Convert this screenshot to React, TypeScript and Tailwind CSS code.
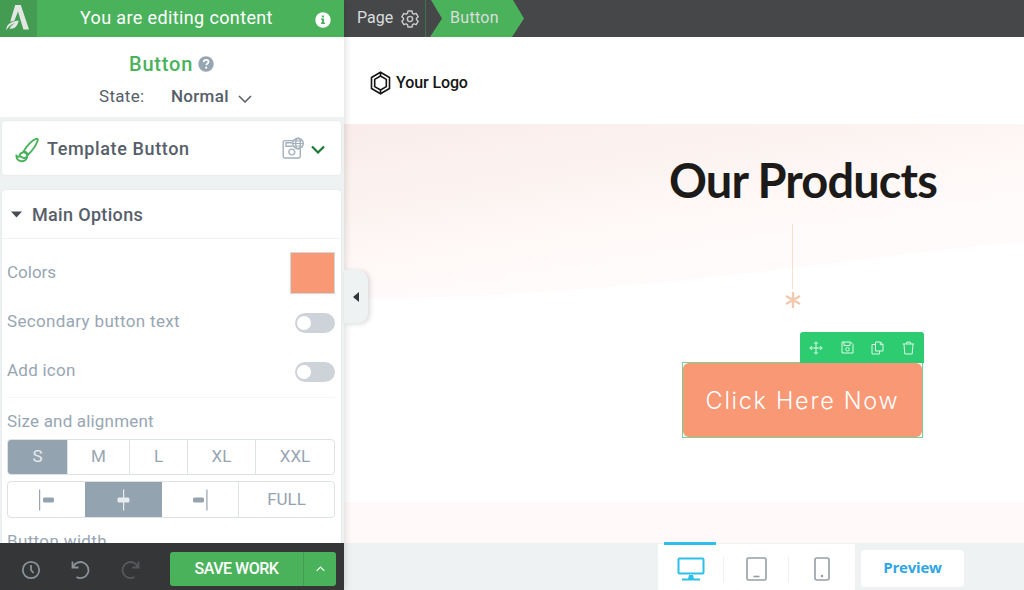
import type { ReactNode } from 'react'
import clsx from 'clsx'

const sizes = [
  { label: 'S', width: 'w-[60px]', active: true },
  { label: 'M', width: 'w-[62px]' },
  { label: 'L', width: 'w-[58px]' },
  { label: 'XL', width: 'w-[68px]' },
  { label: 'XXL', width: 'flex-1' },
]

function LogoMark() {
  return (
    <svg width="37" height="37" viewBox="0 0 37 37" fill="#e4e6e4">
      <path d="M15.200 5h5.600l8.200 24.600h-5.600L18 11.600l-3.600 9.200-4.200 1z" />
      <path d="M6.300 30.200c-.2-5.600 3.800-8.400 12.300-9.700-.7 5.200-3.800 8.800-9.200 8.200 1.600-2.600 3.500-4.200 5.700-5.600-3.800 1.200-6.800 3.600-8.800 7.100z" />
    </svg>
  )
}

function BrushIcon() {
  return (
    <svg width="24" height="26" viewBox="0 0 24 26" fill="none" stroke="#4bb25c" strokeWidth="1.900" strokeLinecap="round" strokeLinejoin="round">
      <path d="M8.600 14.500C11.500 9 17 3 21 1.800c1.600-.4 2.100.6 1.600 2C21 8.500 17 14 12.800 18z" />
      <path d="M8.600 14.500c2.200.2 3.800 1.600 4.200 3.500" />
      <path d="M8 15.500c-2 .3-3.200 1.600-3.500 3.200-.3 1.400-1.400 1.500-3.200-.2.100 4.200 3 6 6.200 5.700 3-.3 5-2.500 4.600-5.400" />
      <path d="M5 19.500c2 .2 2.500 1.500 4 1.500 1.200 0 1.500-.8 3-.9" />
    </svg>
  )
}

function SaveGlobeIcon() {
  return (
    <svg width="22" height="22" viewBox="0 0 22 22" fill="none" stroke="#a3b0bc" strokeWidth="1.400">
      <path d="M11.500 3.600H3a1.800 1.800 0 0 0-1.800 1.800v13.800A1.800 1.800 0 0 0 3 21h13.500a1.800 1.800 0 0 0 1.800-1.800v-7.500" />
      <path d="M10.500 9.300H4V5.800h6.500" />
      <circle cx="9.800" cy="15" r="2.900" />
      <circle cx="16" cy="6.500" r="5.300" />
      <ellipse cx="16" cy="6.500" rx="2.300" ry="5.300" />
      <path d="M10.700 6.500h10.600M11.600 3.900h8.800M11.600 9.100h8.800" strokeWidth="1" />
    </svg>
  )
}

function Chevron({ width, height, className }: { width: number; height: number; className: string }) {
  return (
    <svg width={width} height={height} viewBox="0 0 14 8" className={className} fill="none" stroke="currentColor">
      <path d="M1 1l6 6 6-6" />
    </svg>
  )
}

function Row({ label, className, children }: { label: string; className: string; children?: ReactNode }) {
  return (
    <div className={clsx('flex items-center justify-between text-[17px] text-[#98a6b3]', className)}>
      <span>{label}</span>
      {children}
    </div>
  )
}

function Toggle() {
  return (
    <div className="mt-[2px] flex h-5 w-10 items-center rounded-full bg-[#ced3d9] px-[2px]">
      <div className="h-[14px] w-[14px] rounded-full bg-white" />
    </div>
  )
}

function AlignIcon({ type }: { type: 'left' | 'center' | 'right' }) {
  const barX = type === 'left' ? 4 : type === 'center' ? 1.5 : 0
  const lineX = type === 'left' ? 0.5 : type === 'center' ? 7.5 : 13.8
  return (
    <svg width="15" height="22" viewBox="0 0 15 22" fill="currentColor">
      <rect x={lineX - 0.5} y="0.5" width="1.200" height="21" />
      <rect x={barX} y="8.500" width={type === 'center' ? 12 : 11} height="5" rx="1.500" />
    </svg>
  )
}

function Sidebar() {
  return (
    <aside className="z-10 flex h-full w-[344px] shrink-0 flex-col bg-[#eef2f3] text-[#565e69] shadow-[1px_0_7px_rgba(0,0,0,0.14)]">
      <div className="flex h-[37px] shrink-0 bg-[#4bb25c]">
        <div className="w-[37px] bg-[#439c52]">
          <LogoMark />
        </div>
        <div className="flex flex-1 items-center pb-[2px] pl-[43px] text-[18px] tracking-[0.37px] text-white">
          You are editing content
        </div>
        <svg width="16" height="16" viewBox="0 0 16 16" className="mt-3 mr-[13px]">
          <circle cx="8" cy="8" r="7.700" fill="#fff" />
          <path d="M6.800 3.400h2.200v2H6.800zM6 6.600h3v4h1v1.500H6v-1.500h1V8.100H6z" fill="#4bb25c" />
        </svg>
      </div>

      {/* Element name and state */}
      <div className="h-[80px] shrink-0 bg-white pt-3">
        <div className="flex h-[30px] items-center pl-[129px] text-[20px] font-medium tracking-[0.8px] text-[#4bb25c]">
          <span className="w-[69px]">Button</span>
          <svg width="16" height="16" viewBox="0 0 16 16">
            <circle cx="8" cy="8" r="7.700" fill="#95a5b2" />
            <path d="M5.600 6.200c.1-1.500 1-2.400 2.500-2.400s2.400.9 2.400 2.100c0 1.600-2.200 1.700-2.200 3.300" fill="none" stroke="#fff" strokeWidth="1.800" />
            <circle cx="8.200" cy="11.700" r="1.100" fill="#fff" />
          </svg>
        </div>
        <div className="mt-1 flex h-7 items-center pl-[99px] text-[17px]">
          <span className="w-[72px] tracking-[0.3px]">State:</span>
          <span className="w-[67px] font-medium tracking-[0.3px]">Normal</span>
          <Chevron width={14} height={8} className="mt-[3px] stroke-[1.5]" />
        </div>
      </div>

      <div className="mr-[3px] ml-[2px] mt-1 flex h-[54px] shrink-0 items-center rounded bg-white pl-[13px] shadow-[0_0_2px_rgba(0,0,0,0.08)]">
        <div className="mt-1 w-8">
          <BrushIcon />
        </div>
        <span className="flex-1 text-[18px] font-medium tracking-[0.62px]">Template Button</span>
        <SaveGlobeIcon />
        <Chevron width={14} height={9} className="mt-[3px] mr-[16px] ml-[7px] stroke-[2.2] text-[#187a35]" />
      </div>

      {/* Main options */}
      <div className="mr-[3px] ml-[2px] mt-[15px] flex min-h-0 flex-1 flex-col overflow-hidden rounded-t bg-white shadow-[0_0_2px_rgba(0,0,0,0.08)]">
        <div className="flex h-[49px] shrink-0 items-center border-b border-[#f1f3f4] pl-[9px] text-[18px] font-medium tracking-[0.33px]">
          <svg width="11" height="7" viewBox="0 0 11 7" className="mr-[10px]">
            <path d="M0 .5h11L5.500 6.500z" fill="#454c56" />
          </svg>
          Main Options
        </div>
        <div className="flex flex-1 flex-col pr-[6px] pl-[5px]">
          <Row label="Colors" className="mt-[9px] h-[49px] shrink-0">
            <div className="h-[42px] w-[45px] border border-[#d4d8db] bg-[#f99874]" />
          </Row>
          <Row label="Secondary button text" className="h-[49px] shrink-0 tracking-[0.34px]">
            <Toggle />
          </Row>
          <Row label="Add icon" className="h-[49px] shrink-0 tracking-[0.24px]">
            <Toggle />
          </Row>
          <Row label="Size and alignment" className="mt-[2px] h-[42px] shrink-0 border-t border-[#f4f6f7] pt-[7px] tracking-[0.18px]" />
          <div className="flex h-[36px] shrink-0 overflow-hidden rounded border border-[#dde2e5] text-[17px] text-[#98a6b3]">
            {sizes.map(({ label, width, active }) => (
              <div
                key={label}
                className={clsx(
                  'flex items-center justify-center border-r border-[#dde2e5] last:border-r-0',
                  width,
                  active && 'bg-[#94a3b0] text-[#e8ecee]',
                )}
              >
                {label}
              </div>
            ))}
          </div>
          <div className="mt-[6px] flex h-[37px] shrink-0 overflow-hidden rounded border border-[#dde2e5] text-[17px] text-[#94a3b0]">
            <div className="flex w-[77px] items-center justify-center">
              <AlignIcon type="left" />
            </div>
            <div className="flex w-[77px] items-center justify-center bg-[#94a3b0] text-[#e8ecee]">
              <AlignIcon type="center" />
            </div>
            <div className="flex w-[77px] items-center justify-center border-r border-[#dde2e5]">
              <AlignIcon type="right" />
            </div>
            <div className="flex flex-1 items-center justify-center">FULL</div>
          </div>
          <div className="mt-[10px] text-[17px] leading-[26px] tracking-[0.36px] text-[#98a6b3]">Button width</div>
        </div>
      </div>

      {/* History and save */}
      <div className="flex h-[47px] shrink-0 items-center bg-[#353638] pt-1 pl-[21px]">
        <svg width="20" height="20" viewBox="0 0 20 20" className="mt-[2px]" fill="none" stroke="#8b9298" strokeWidth="1.800">
          <circle cx="10" cy="10" r="8.200" />
          <path d="M10 5v5l2.500 3" />
        </svg>
        <svg width="20" height="20" viewBox="0 0 20 20" className="mt-[2px] ml-[30px]" fill="none" stroke="#8b9298" strokeWidth="1.800">
          <path d="M1.500 1.500v6h6M2 7.200A8 8 0 1 1 5.500 17" />
        </svg>
        <svg width="20" height="20" viewBox="0 0 20 20" className="mt-[2px] ml-[29px]" fill="none" stroke="#56595c" strokeWidth="1.800">
          <path d="M18.500 1.500v6h-6M18 7.200A8 8 0 1 0 14.500 17" />
        </svg>
        <div className="ml-[30px] flex h-[34px] w-[166px] overflow-hidden rounded-[3px] bg-[#4bb25c] text-white">
          <div className="flex w-[134px] items-center justify-center border-r border-[#439c52] text-[16px] font-medium tracking-[-0.5px]">
            SAVE WORK
          </div>
          <div className="flex flex-1 items-center justify-center">
            <Chevron width={9} height={6} className="rotate-180 stroke-[1.7]" />
          </div>
        </div>
      </div>
    </aside>
  )
}

function TopBar() {
  return (
    <div className="flex h-[37px] shrink-0 bg-[#464749] text-[16px] text-[#dadddd]">
      <div className="flex w-[82px] items-center border-r border-[#3d7749] pl-[13px]">
        <span className="w-[44px] pb-[2px]">Page</span>
        <svg width="18" height="18" viewBox="0 0 18 18" fill="none" stroke="#c9cccd" strokeWidth="1.400" strokeLinejoin="round" className="mt-[1px]">
          <path d="M7 1h4l.5 2.300 1.500.900 2.200-.8 2 3.400L15.500 8.300v1.400l1.700 1.500-2 3.400-2.200-.8-1.500.9L11 17H7l-.5-2.300-1.500-.9-2.200.8-2-3.400 1.700-1.500V8.300L.8 6.800l2-3.400 2.200.8 1.500-.9z" />
          <circle cx="9" cy="9" r="2.600" />
        </svg>
      </div>
      <div className="ml-1 flex w-[94px] items-center bg-[#4bb25c] pb-[2px] pl-[20px] tracking-[0.3px] [clip-path:polygon(1px_0,83px_0,94px_50%,82px_100%,0_100%,12px_50%)]">
        Button
      </div>
    </div>
  )
}

function ElementToolbar() {
  return (
    <div className="absolute -top-[31px] -right-[2px] flex h-[31px] w-[124px] items-center justify-around rounded-t-[3px] bg-[#2ecc71] text-[#dcf8e7]">
      <svg width="14" height="14" viewBox="0 0 14 14" fill="none" stroke="currentColor" strokeWidth="1">
        <path d="M7 1v12M1 7h12M5 2.800l2-2 2 2M5 11.200l2 2 2-2M2.800 5l-2 2 2 2M11.200 5l2 2-2 2" />
      </svg>
      <svg width="13" height="13" viewBox="0 0 13 13" fill="none" stroke="currentColor" strokeWidth="1">
        <path d="M1 1h8.500L12 3.500V12H1zM3 1.200v3.300h6V1.200" />
        <circle cx="6.500" cy="8.200" r="1.800" />
      </svg>
      <svg width="13" height="14" viewBox="0 0 13 14" fill="none" stroke="currentColor" strokeWidth="1">
        <path d="M4.500 1h5L12 3.500V10H4.500zM9.300 1v2.700H12M4.500 3.500H1V13h7.500v-3" />
      </svg>
      <svg width="13" height="14" viewBox="0 0 13 14" fill="none" stroke="currentColor" strokeWidth="1">
        <path d="M.8 3h11.400M4 3l.8-1.900h3.400L9 3M2 3.200L2.800 13h7.400L11 3.200" />
      </svg>
    </div>
  )
}

function Canvas() {
  return (
    <div className="flex min-h-0 flex-1 flex-col">
      <div className="flex h-[87px] shrink-0 items-center pt-[4px] pl-[26px]">
        <svg width="21" height="24" viewBox="0 0 21 24" fill="none" stroke="#151515" strokeWidth="1.600">
          <path d="M10.500 1.200l9 5.300v11l-9 5.300-9-5.300v-11z" />
          <path d="M10.500 5l5.800 3.400v7.200L10.500 19l-5.800-3.400V8.400zM10.500 1v4M10.500 19v4" />
        </svg>
        <span className="ml-[5px] text-[16px] font-medium tracking-[-0.1px] text-[#151515]">Your Logo</span>
      </div>

      {/* Products section with a curved tint behind the heading */}
      <div className="relative flex h-[378px] shrink-0 flex-col pl-[325px]">
        <svg width="680" height="176" viewBox="0 0 680 176" className="absolute top-0 left-0">
          <defs>
            <linearGradient id="tint" gradientUnits="userSpaceOnUse" x1="0" y1="0" x2="29" y2="176">
              <stop offset="0" stopColor="#f9ecea" />
              <stop offset="0.600" stopColor="#fdf5f3" />
              <stop offset="1" stopColor="#fffbfa" />
            </linearGradient>
          </defs>
          <path d="M0 0h680v118C520 130 295 174 0 175z" fill="url(#tint)" />
        </svg>
        <h1 className="relative pt-[28px] font-['Lato'] text-[47px] leading-[56px] font-bold tracking-[-0.9px] whitespace-nowrap text-[#1c1b1a]">
          Our Products
        </h1>
        <div className="relative mt-4 ml-[123px] h-[65px] w-px bg-[#f8dfcf]" />
        <svg width="16" height="16" viewBox="0 0 16 16" className="relative mt-[3px] ml-[116px]" stroke="#f2c9ae" strokeWidth="2.400">
          <path d="M8 0v16M1 4l14 8M15 4L1 12" />
        </svg>
        <div className="relative mt-[54px] ml-[13px] h-[76px] w-[241px] border border-[#79cf92] bg-white">
          <ElementToolbar />
          <div className="flex h-full items-center justify-center rounded-[6px] bg-[#f99874] pt-[2px] font-['Inter'] text-[23.5px] font-light tracking-[1.7px] whitespace-nowrap text-white">
            Click Here Now
          </div>
        </div>
      </div>
      <div className="flex-1 bg-[#fffaf9]" />
    </div>
  )
}

function DeviceBar() {
  return (
    <div className="flex h-[47px] shrink-0 bg-[#eef2f3] pl-[314px]">
      <div className="relative mt-[1px] flex w-[197px] items-center bg-white">
        <div className="absolute -top-[2px] left-[6px] h-[3px] w-[52px] bg-[#2cbfe9]" />
        <div className="mt-1 flex h-[26px] w-[66px] items-center justify-center border-r border-[#eef0f1]">
          <svg width="28" height="24" viewBox="0 0 28 24" fill="none" stroke="#2cbfe9" strokeWidth="2">
            <rect x="1.500" y="1.500" width="25" height="15" rx="1" />
            <path d="M5 22.500h18" />
            <path d="M12 18h4l1 4h-6z" fill="#2cbfe9" stroke="none" />
          </svg>
        </div>
        <div className="mt-1 flex h-[26px] w-[65px] items-center justify-center border-r border-[#eef0f1]">
          <svg width="21" height="24" viewBox="0 0 21 24" fill="none" stroke="#969ea5" strokeWidth="1.600">
            <rect x="1" y="1" width="19" height="22" rx="1.500" />
            <path d="M7.500 19.500h6" />
          </svg>
        </div>
        <div className="mt-1 flex flex-1 items-center justify-center">
          <svg width="16" height="24" viewBox="0 0 16 24" fill="none" stroke="#969ea5" strokeWidth="1.600">
            <rect x="1" y="1" width="14" height="22" rx="2" />
            <circle cx="8" cy="19" r="1.300" fill="#969ea5" stroke="none" />
          </svg>
        </div>
      </div>
      <div className="mt-[7px] ml-[6px] flex h-[37px] w-[103px] items-center justify-center rounded bg-white pb-[2px] font-['Open_Sans'] text-[15px] font-bold tracking-[-0.2px] text-[#2fa5e4]">
        Preview
      </div>
    </div>
  )
}

export default function App() {
  return (
    <div className="flex h-[590px] w-[1024px] overflow-hidden bg-white font-['Roboto',sans-serif]">
      <Sidebar />
      <main className="relative flex min-w-0 flex-1 flex-col">
        <TopBar />
        <Canvas />
        <DeviceBar />
        {/* Collapse handle */}
        <div className="absolute top-[270px] left-0 z-20 flex h-[53px] w-[24px] items-center justify-center rounded-r-[10px] bg-[#eef2f3] shadow-[2px_1px_5px_rgba(0,0,0,0.15)]">
          <svg width="6" height="10" viewBox="0 0 6 10">
            <path d="M6 0v10L0 5z" fill="#333538" />
          </svg>
        </div>
      </main>
    </div>
  )
}
